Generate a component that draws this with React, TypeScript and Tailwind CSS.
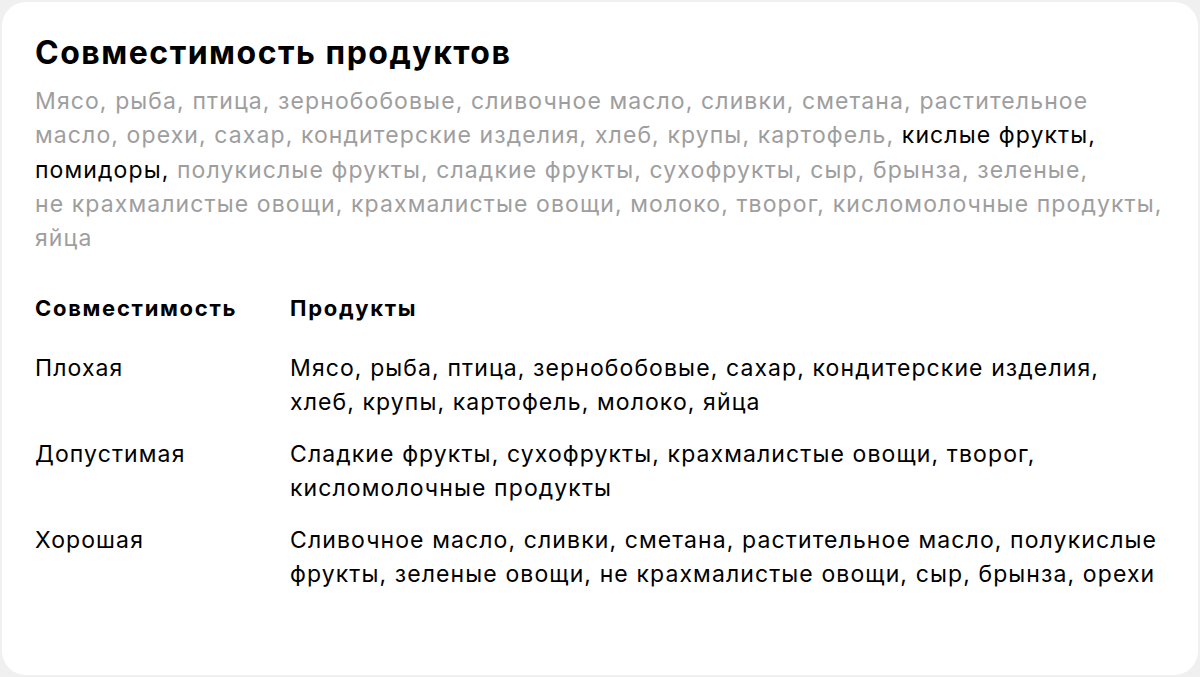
const rows = [
  {
    label: 'Плохая',
    items: 'Мясо, рыба, птица, зернобобовые, сахар, кондитерские изделия, хлеб, крупы, картофель, молоко, яйца',
  },
  {
    label: 'Допустимая',
    items: 'Сладкие фрукты, сухофрукты, крахмалистые овощи, творог, кисломолочные продукты',
  },
  {
    label: 'Хорошая',
    items: 'Сливочное масло, сливки, сметана, растительное масло, полукислые фрукты, зеленые овощи, не\u00a0крахмалистые овощи, сыр, брынза, орехи',
  },
];

export default function App() {
  return (
    <div className="w-[1200px] h-[677px] bg-[#f0f0f0] p-[2px] font-['Inter',sans-serif] text-black">
      <div className="h-full bg-white rounded-[24px] pl-[33px] pr-[35px] pt-[31px]">
        <h1 className="text-[32px] leading-[40px] font-bold tracking-[1.5px]">Совместимость продуктов</h1>
        <p className="mt-[11px] text-[23px] leading-[34.3px] tracking-[1.1px] text-[#9e9e9e]">
          Мясо, рыба, птица, зернобобовые, сливочное масло, сливки, сметана, растительное масло, орехи, сахар,
          кондитерские изделия, хлеб, крупы, картофель, <span className="text-black">кислые фрукты, помидоры,</span>{' '}
          полукислые фрукты, сладкие фрукты, сухофрукты, сыр, брынза, зеленые, не&nbsp;крахмалистые овощи,
          крахмалистые овощи, молоко, творог, кисломолочные продукты, яйца
        </p>
        <div className="mt-[36px] grid grid-cols-[255px_1fr] gap-y-[17px] text-[23px] leading-[34.5px] tracking-[1.1px]">
          <div className="font-bold text-[22px] tracking-[1.7px]">Совместимость</div>
          <div className="font-bold text-[22px] tracking-[1.7px]">Продукты</div>
          {rows.map((r, i) => (
            <div key={r.label} className="contents">
              <div className={i === 0 ? 'mt-[8px]' : ''}>{r.label}</div>
              <div className={i === 0 ? 'mt-[8px]' : ''}>{r.items}</div>
            </div>
          ))}
        </div>
      </div>
    </div>
  );
}
